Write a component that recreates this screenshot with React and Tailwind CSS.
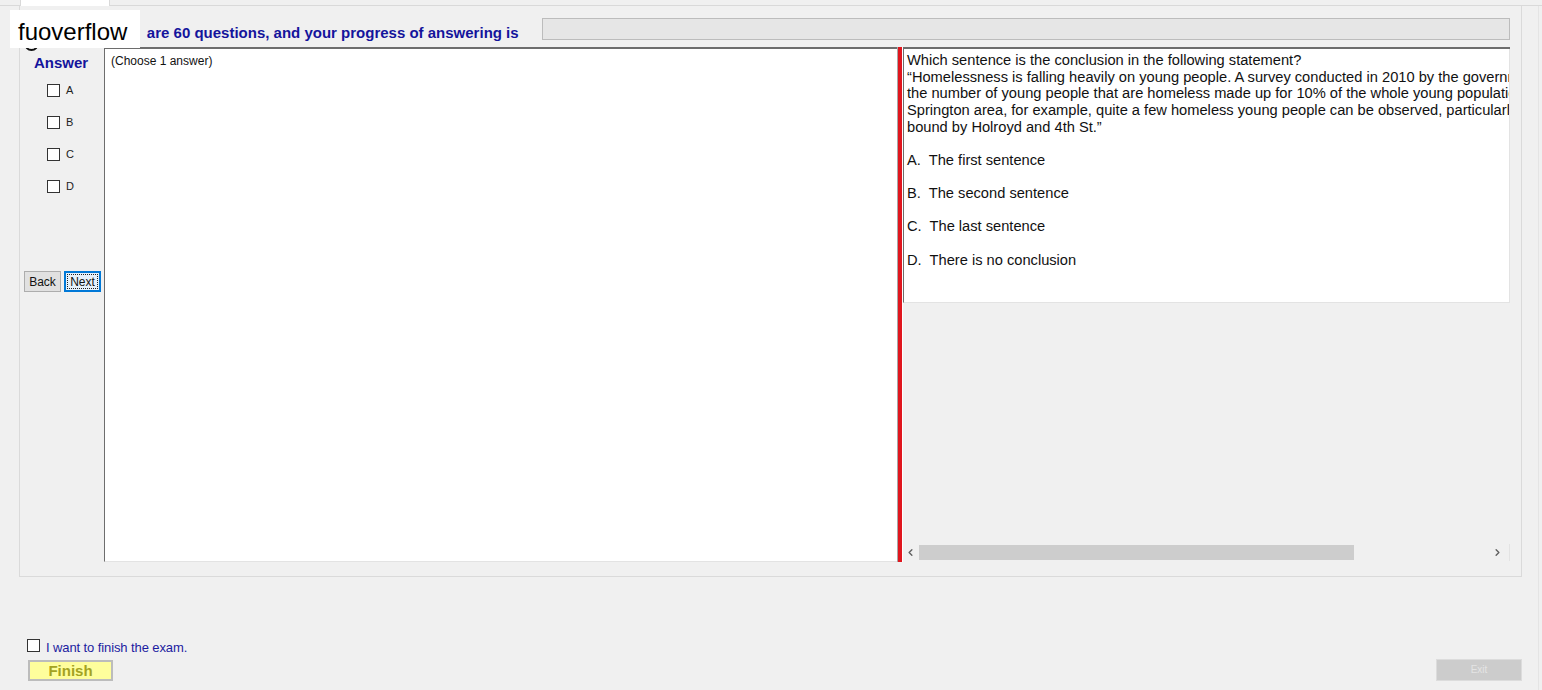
import { ChevronLeft, ChevronRight } from 'lucide-react'

const choices = ['A', 'B', 'C', 'D']

const question = [
  'Which sentence is the conclusion in the following statement?',
  '“Homelessness is falling heavily on young people. A survey conducted in 2010 by the government showed that',
  'the number of young people that are homeless made up for 10% of the whole young population in the city. In the',
  'Springton area, for example, quite a few homeless young people can be observed, particularly in the area',
  'bound by Holroyd and 4th St.”',
  '',
  'A.  The first sentence',
  '',
  'B.  The second sentence',
  '',
  'C.  The last sentence',
  '',
  'D.  There is no conclusion',
]

function Box() {
  return <span className="block w-[13px] h-[13px] bg-white border border-[#333333]" />
}

export default function App() {
  return (
    <div
      className="relative w-[1542px] h-[690px] overflow-hidden bg-[#f0f0f0] flex flex-col"
      style={{ fontFamily: '"Liberation Sans", Arial, sans-serif' }}
    >
      {/* Watermark */}
      <div className="absolute left-[24px] top-[36px] w-[15px] h-[15px] rounded-full border-2 border-[#111111]" />
      <div className="absolute left-[10px] top-[10px] w-[130px] h-[38px] bg-white pl-[8px] pt-[8px] text-[24px] leading-[28px] text-black z-10">
        fuoverflow
      </div>

      {/* Tab strip */}
      <div className="flex h-[6px] shrink-0">
        <div className="w-[20px] border-b border-[#d9d9d9]" />
        <div className="w-[90px] bg-white border-x border-[#d9d9d9]" />
        <div className="flex-1 border-b border-[#d9d9d9]" />
      </div>

      {/* Tab page */}
      <div className="flex-1 flex flex-col w-[1539px] border-r border-[#e4e4e4]">
        {/* Group box */}
        <div className="ml-[19px] w-[1503px] h-[571px] border border-t-0 border-[#dadada] flex flex-col">
          {/* Header */}
          <div className="flex items-center h-[22px] mt-[12px] pl-[76px] pr-[11px]">
            <span className="text-[15px] font-bold text-[#14149c] whitespace-nowrap leading-[17px] mt-[6px]">
              There<span className="ml-[10px]">are 60 questions, and your progress of answering is</span>
            </span>
            <div className="ml-auto w-[968px] h-[22px] bg-[#e6e6e6] border border-[#bcbcbc]" />
          </div>

          {/* Main row */}
          <div className="flex h-[515px] mt-[7px] pl-[4px] pr-[11px]">
            {/* Answer panel */}
            <div className="w-[80px] flex flex-col">
              <div className="pl-[10px] pt-[7px] text-[15px] font-bold text-[#14149c] leading-[17px]">Answer</div>
              <div className="flex flex-col gap-[19px] pl-[23px] pt-[13px]">
                {choices.map(c => (
                  <label key={c} className="flex items-center gap-[6px] h-[13px]">
                    <Box />
                    <span className="text-[11px] text-[#222222]">{c}</span>
                  </label>
                ))}
              </div>
              <div className="flex gap-[3px] mt-[78px]">
                <button className="w-[37px] h-[21px] bg-[#e1e1e1] border border-[#adadad] text-[12px] leading-[14px] text-[#111111]">
                  Back
                </button>
                <button className="w-[37px] h-[21px] bg-[#e5f1fb] border-2 border-[#0078d7] p-[1px]">
                  <span className="flex items-center justify-center w-full h-full border border-dotted border-[#222222] text-[12px] leading-[14px] text-[#111111]">
                    Next
                  </span>
                </button>
              </div>
            </div>

            {/* Answer text box */}
            <div className="w-[793px] bg-white border-l border-t-2 border-[#6d6d6d] border-b border-b-[#e3e3e3] pl-[6px] pt-[5px]">
              <div className="text-[12px] leading-[14px] text-[#111111]">(Choose 1 answer)</div>
            </div>

            {/* Splitter */}
            <div className="flex w-[6px]">
              <div className="w-[1px] bg-[#a8a8a8]" />
              <div className="w-[4px] bg-[#e0161e]" />
              <div className="w-[1px] bg-white" />
            </div>

            {/* Question panel */}
            <div className="flex-1 flex flex-col border-t-2 border-[#6d6d6d] overflow-hidden">
              <div className="h-[254px] bg-white border-l border-[#6d6d6d] border-r border-r-[#e3e3e3] border-b border-b-[#e3e3e3] pl-[3px] pt-[3px] overflow-hidden">
                {question.map((line, i) => (
                  <div key={i} className="whitespace-pre text-[14.67px] leading-[16.65px] h-[16.65px] text-[#111111]">
                    {line}
                  </div>
                ))}
              </div>
              <div className="flex-1" />
              <div className="flex items-center h-[17px] bg-[#f0f0f0] border-r border-[#e3e3e3] mb-[1px]">
                <ChevronLeft size={11} strokeWidth={3} className="text-[#606060] mx-[2px]" />
                <div className="ml-[1px] w-[435px] h-[15px] bg-[#cdcdcd]" />
                <div className="flex-1" />
                <ChevronRight size={11} strokeWidth={3} className="text-[#606060] mr-[6px]" />
              </div>
            </div>
          </div>
        </div>

        {/* Bottom */}
        <div className="flex items-start gap-[6px] pl-[27px] mt-[62px] h-[14px]">
          <Box />
          <span className="text-[13px] leading-[14px] tracking-[-0.1px] text-[#1c1ca0] mt-[2px]">I want to finish the exam.</span>
        </div>
        <div className="flex items-start justify-between pl-[28px] pr-[16px] mt-[7px]">
          <button className="w-[85px] h-[21px] bg-[#fefe9c] border-2 border-[#bcbcbc] text-[15px] font-bold text-[#a3a322] leading-[17px]">
            Finish
          </button>
          <button className="w-[86px] h-[22px] -mt-[1px] bg-[#cccccc] border border-[#dcdcdc] text-[10px] leading-[12px] text-[#e4e4e4]">
            Exit
          </button>
        </div>
      </div>
    </div>
  )
}
